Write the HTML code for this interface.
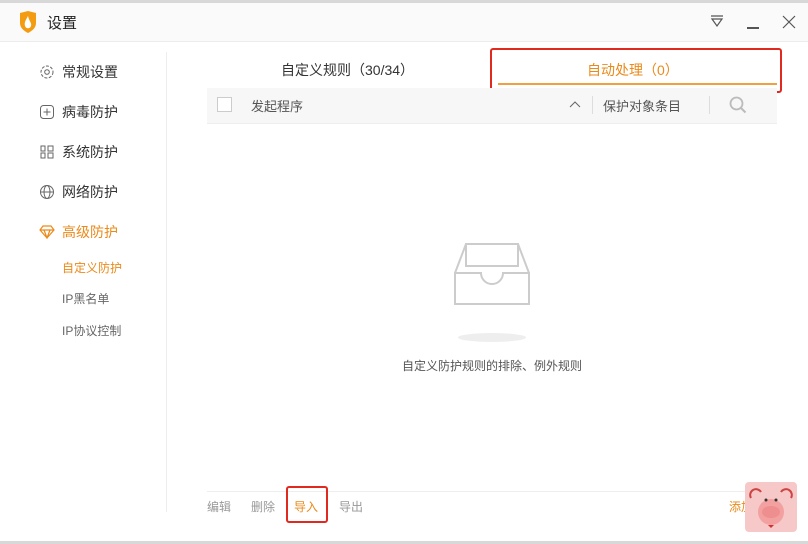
<!DOCTYPE html><html><head><meta charset="utf-8"><style>
body{margin:0;width:808px;height:544px;overflow:hidden;background:#fff;font-family:"Liberation Sans","Noto Sans CJK SC",sans-serif;position:relative}
.a{position:absolute;white-space:nowrap}
.nav{font-size:14px;color:#333}
.sub{font-size:12px;color:#666}
</style></head><body>
<div class="a" style="left:0;top:0;width:808px;height:3px;background:#d8d8d8"></div>
<div class="a" style="left:0;top:3px;width:808px;height:38px;background:#fafafa;border-bottom:1px solid #ececec"></div>
<svg class="a" style="left:18px;top:10px" width="20" height="24" viewBox="0 0 20 24"><path d="M2 3 L10 1 L18 3 L18 13 C18 18 14 21 10 23 C6 21 2 18 2 13Z" fill="#f39c12"/><path d="M10 6 C8 10 6 12 7 16 C8 19 12 19 13 16 C14 13 11 11 10 6Z" fill="#fff"/></svg>
<div class="a" style="left:47px;top:12px;font-size:15px;color:#222">设置</div>
<svg class="a" style="left:709px;top:14px" width="16" height="14"><path d="M2 2H14M3 5L8 12L13 5Z" stroke="#555" fill="none" stroke-width="1.2"/></svg>
<div class="a" style="left:747px;top:27px;width:12px;height:1.5px;background:#555"></div>
<svg class="a" style="left:782px;top:15px" width="14" height="14"><path d="M1 1L13 13M13 1L1 13" stroke="#555" stroke-width="1.2"/></svg>
<div class="a" style="left:166px;top:52px;width:1px;height:460px;background:#eee"></div>
<svg class="a" style="left:39px;top:64px" width="16" height="16" viewBox="0 0 16 16"><circle cx="8" cy="8" r="6" stroke="#666" fill="none" stroke-dasharray="3 1.5"/><circle cx="8" cy="8" r="2.3" stroke="#666" fill="none"/></svg>
<div class="a nav" style="left:62px;top:62px">常规设置</div>
<svg class="a" style="left:39px;top:104px" width="16" height="16"><rect x="1.5" y="1.5" width="13" height="13" rx="3" stroke="#666" fill="none"/><path d="M8 4.5V11.5M4.5 8H11.5" stroke="#666"/></svg>
<div class="a nav" style="left:62px;top:102px">病毒防护</div>
<svg class="a" style="left:39px;top:144px" width="16" height="16"><path d="M2 2h4v5h-4zM9 2h5v5h-5zM2 9h4v5h-4zM9 9h5v5h-5z" stroke="#666" fill="none"/></svg>
<div class="a nav" style="left:62px;top:142px">系统防护</div>
<svg class="a" style="left:39px;top:184px" width="16" height="16"><circle cx="8" cy="8" r="6.5" stroke="#666" fill="none"/><ellipse cx="8" cy="8" rx="3" ry="6.5" stroke="#666" fill="none"/><path d="M1.5 8H14.5" stroke="#666"/></svg>
<div class="a nav" style="left:62px;top:182px">网络防护</div>
<svg class="a" style="left:39px;top:225px" width="16" height="14"><path d="M1 5L4 1H12L15 5L8 13Z M1 5H15 M5 5L8 13L11 5" stroke="#ea8a1a" fill="none" stroke-width="1.2"/></svg>
<div class="a nav" style="left:62px;top:222px;color:#ea8a1a">高级防护</div>
<div class="a sub" style="left:62px;top:259px;color:#ea8a1a">自定义防护</div>
<div class="a sub" style="left:62px;top:290px">IP黑名单</div>
<div class="a sub" style="left:62px;top:322px">IP协议控制</div>
<div class="a" style="left:281px;top:60px;font-size:14px;color:#333">自定义规则（30/34）</div>
<div class="a" style="left:587px;top:60px;font-size:14px;color:#ea8a1a">自动处理（0）</div>
<div class="a" style="left:498px;top:83px;width:279px;height:2px;background:#f0a040"></div>
<div class="a" style="left:490px;top:48px;width:292px;height:45px;border:2px solid #e02a20;border-radius:3px;box-sizing:border-box"></div>
<div class="a" style="left:207px;top:88px;width:570px;height:35px;background:#f7f7f7;border-bottom:1px solid #eee"></div>
<div class="a" style="left:217px;top:97px;width:13px;height:13px;border:1px solid #ccc;background:#fff"></div>
<div class="a" style="left:251px;top:96px;font-size:13px;color:#555">发起程序</div>
<svg class="a" style="left:569px;top:100px" width="12" height="8"><path d="M1 7L6 2L11 7" stroke="#666" fill="none"/></svg>
<div class="a" style="left:592px;top:96px;width:1px;height:18px;background:#ddd"></div>
<div class="a" style="left:603px;top:96px;font-size:13px;color:#555">保护对象条目</div>
<div class="a" style="left:709px;top:96px;width:1px;height:18px;background:#ddd"></div>
<svg class="a" style="left:729px;top:96px" width="18" height="18"><circle cx="7.5" cy="7.5" r="6" stroke="#bbb" stroke-width="1.8" fill="none"/><path d="M12 12L16.5 16.5" stroke="#bbb" stroke-width="2"/></svg>
<svg class="a" style="left:450px;top:240px" width="84" height="70"><path d="M16 4H68V26H16Z M16 4L5 33M68 4L79 33 M5 33H31A11 11 0 0 0 53 33H79V64H5Z" stroke="#ccc" stroke-width="2" fill="none"/></svg>
<div class="a" style="left:458px;top:333px;width:68px;height:9px;border-radius:50%;background:#eee"></div>
<div class="a" style="left:402px;top:357px;font-size:12px;color:#555">自定义防护规则的排除、例外规则</div>
<div class="a" style="left:207px;top:491px;width:570px;height:1px;background:#eee"></div>
<div class="a" style="left:207px;top:498px;font-size:12px;color:#999">编辑</div>
<div class="a" style="left:251px;top:498px;font-size:12px;color:#999">删除</div>
<div class="a" style="left:294px;top:498px;font-size:12px;color:#ea8a1a">导入</div>
<div class="a" style="left:286px;top:486px;width:42px;height:37px;border:2px solid #e02a20;border-radius:3px;box-sizing:border-box"></div>
<div class="a" style="left:339px;top:498px;font-size:12px;color:#999">导出</div>
<div class="a" style="left:729px;top:498px;font-size:12px;color:#ea8a1a">添加</div>
<div class="a" style="left:745px;top:482px;width:52px;height:50px;background:#f7c8c8;border-radius:4px"></div>
<svg class="a" style="left:745px;top:482px" width="52" height="50"><path d="M6 16A5 5 0 0 1 16 10M36 10A5 5 0 0 1 46 16" stroke="#c44" stroke-width="2" fill="none"/><circle cx="26" cy="30" r="13" fill="#f3a0a0"/><circle cx="21" cy="18" r="1.5" fill="#333"/><circle cx="31" cy="18" r="1.5" fill="#333"/><ellipse cx="26" cy="30" rx="9" ry="6" fill="#ef8e8e"/><path d="M23 43H29L26 46Z" fill="#c33"/></svg>
<div class="a" style="left:0;top:541px;width:808px;height:3px;background:#d8d8d8"></div>
</body></html>
